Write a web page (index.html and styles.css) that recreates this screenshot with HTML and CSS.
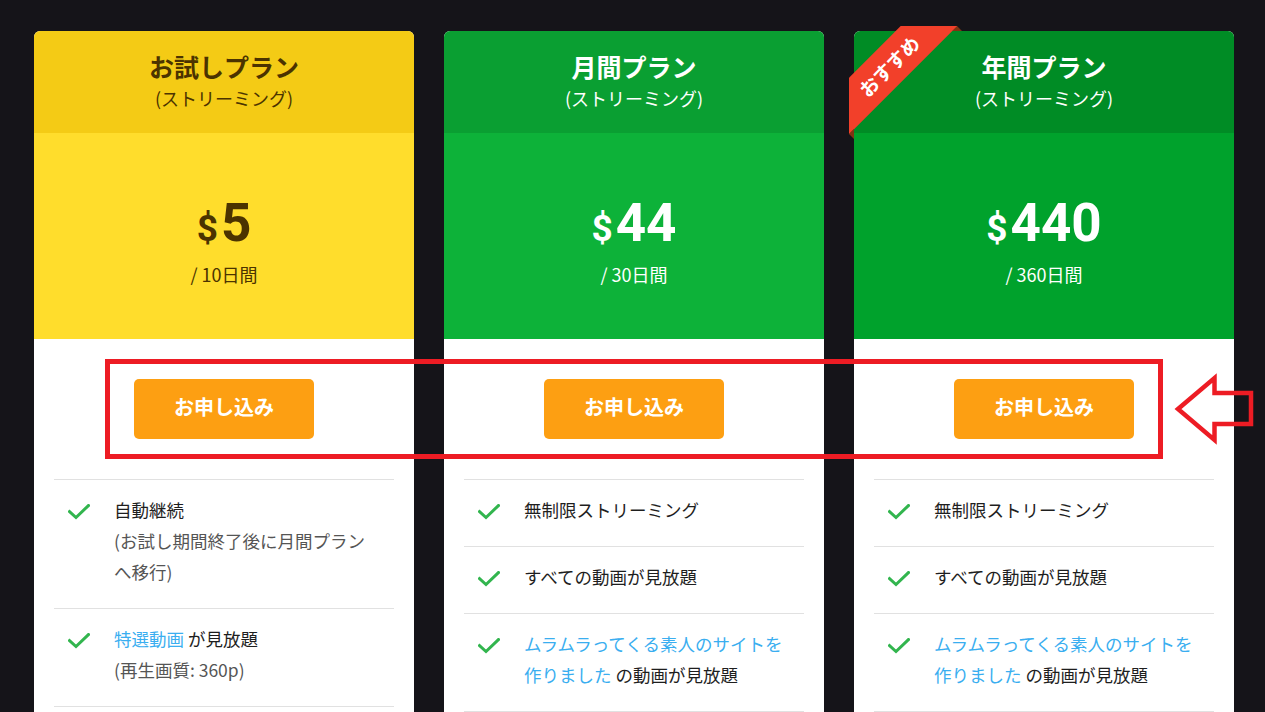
FILE: index.html
```html
<!DOCTYPE html>
<html lang="ja">
<head>
<meta charset="utf-8">
<title>プラン</title>
<link rel="stylesheet" href="styles.css">
</head>
<body>
<div class="page">
  <div class="plans">
    <div class="plan plan-trial">
      <div class="plan-head">
        <div class="plan-name">お試しプラン</div>
        <div class="plan-sub">(ストリーミング)</div>
      </div>
      <div class="plan-price">
        <div class="price"><span class="cur">$</span><span class="amt">5</span></div>
        <div class="period">/ 10日間</div>
      </div>
      <div class="plan-action"><a class="btn" href="#">お申し込み</a></div>
      <ul class="features">
        <li>
          <svg class="check" viewBox="0 0 22 16"><polyline points="1.5,7.5 8,13.5 20.5,1.5"/></svg>
          <div class="ftext">自動継続<span class="note">(お試し期間終了後に月間プラン<br>へ移行)</span></div>
        </li>
        <li>
          <svg class="check" viewBox="0 0 22 16"><polyline points="1.5,7.5 8,13.5 20.5,1.5"/></svg>
          <div class="ftext"><a class="link" href="#">特選動画</a> が見放題<span class="note">(再生画質: 360p)</span></div>
        </li>
      </ul>
    </div>

    <div class="plan plan-month">
      <div class="plan-head">
        <div class="plan-name">月間プラン</div>
        <div class="plan-sub">(ストリーミング)</div>
      </div>
      <div class="plan-price">
        <div class="price"><span class="cur">$</span><span class="amt">44</span></div>
        <div class="period">/ 30日間</div>
      </div>
      <div class="plan-action"><a class="btn" href="#">お申し込み</a></div>
      <ul class="features">
        <li>
          <svg class="check" viewBox="0 0 22 16"><polyline points="1.5,7.5 8,13.5 20.5,1.5"/></svg>
          <div class="ftext">無制限ストリーミング</div>
        </li>
        <li>
          <svg class="check" viewBox="0 0 22 16"><polyline points="1.5,7.5 8,13.5 20.5,1.5"/></svg>
          <div class="ftext">すべての動画が見放題</div>
        </li>
        <li>
          <svg class="check" viewBox="0 0 22 16"><polyline points="1.5,7.5 8,13.5 20.5,1.5"/></svg>
          <div class="ftext"><a class="link" href="#">ムラムラってくる素人のサイトを<br>作りました</a> の動画が見放題</div>
        </li>
      </ul>
    </div>

    <div class="plan plan-year">
      <div class="ribbon"><span>おすすめ</span></div>
      <div class="plan-head">
        <div class="plan-name">年間プラン</div>
        <div class="plan-sub">(ストリーミング)</div>
      </div>
      <div class="plan-price">
        <div class="price"><span class="cur">$</span><span class="amt">440</span></div>
        <div class="period">/ 360日間</div>
      </div>
      <div class="plan-action"><a class="btn" href="#">お申し込み</a></div>
      <ul class="features">
        <li>
          <svg class="check" viewBox="0 0 22 16"><polyline points="1.5,7.5 8,13.5 20.5,1.5"/></svg>
          <div class="ftext">無制限ストリーミング</div>
        </li>
        <li>
          <svg class="check" viewBox="0 0 22 16"><polyline points="1.5,7.5 8,13.5 20.5,1.5"/></svg>
          <div class="ftext">すべての動画が見放題</div>
        </li>
        <li>
          <svg class="check" viewBox="0 0 22 16"><polyline points="1.5,7.5 8,13.5 20.5,1.5"/></svg>
          <div class="ftext"><a class="link" href="#">ムラムラってくる素人のサイトを<br>作りました</a> の動画が見放題</div>
        </li>
      </ul>
    </div>
  </div>

  <div class="highlight"></div>
  <svg class="arrow" viewBox="0 0 90 80" width="90" height="80">
    <polygon points="8,39 44.5,8 44.5,23 81,23 81,54 44.5,54 44.5,70"/>
  </svg>
</div>
</body>
</html>
```

FILE: styles.css
```css
html, body {
  margin: 0;
  padding: 0;
}
body {
  background: #151419;
  font-family: "Noto Sans CJK JP", "Noto Sans", sans-serif;
  overflow: hidden;
}
.page {
  position: relative;
  width: 1265px;
  height: 712px;
  overflow: hidden;
}
.plans {
  display: flex;
  gap: 30px;
  padding: 31px 0 0 34px;
}
.plan {
  position: relative;
  width: 380px;
  padding-bottom: 60px;
  background: #ffffff;
  border-radius: 6px;
}
.plan-head {
  box-sizing: border-box;
  height: 102px;
  padding-top: 20px;
  text-align: center;
  border-radius: 6px 6px 0 0;
}
.plan-name {
  font-size: 25px;
  font-weight: 700;
  line-height: 30px;
}
.plan-sub {
  font-size: 18px;
  line-height: 34px;
}
.plan-price {
  box-sizing: border-box;
  height: 206px;
  padding-top: 64px;
  text-align: center;
}
.price {
  display: flex;
  justify-content: center;
  align-items: baseline;
  font-family: Roboto, "Liberation Sans", sans-serif;
  font-weight: 700;
}
.cur {
  font-size: 37px;
  line-height: 1;
  margin-right: 3px;
}
.amt {
  font-size: 53px;
  line-height: 1;
}
.period {
  margin-top: 11px;
  font-size: 18px;
  line-height: 26px;
}

.plan-trial .plan-head { background: #f4cb15; color: #4b3300; }
.plan-trial .plan-price { background: #ffdd2c; color: #4b3300; }
.plan-month .plan-head { background: #0a9f32; color: #ffffff; }
.plan-month .plan-price { background: #0db239; color: #ffffff; }
.plan-year .plan-head { background: #008c25; color: #ffffff; }
.plan-year .plan-price { background: #00a22c; color: #ffffff; }

.plan-action {
  display: flex;
  justify-content: center;
  padding: 40px 0;
}
.btn {
  display: block;
  width: 180px;
  height: 60px;
  line-height: 56px;
  background: #fd9f12;
  color: #ffffff;
  border-radius: 5px;
  text-align: center;
  font-size: 20px;
  font-weight: 700;
  text-decoration: none;
}
.features {
  list-style: none;
  margin: 0 20px;
  padding: 0;
  border-top: 1px solid #e1e1e1;
}
.features li {
  display: flex;
  align-items: flex-start;
  gap: 24px;
  padding: 14px 0 21px 14px;
  border-bottom: 1px solid #e1e1e1;
}
.check {
  flex: none;
  width: 22px;
  height: 16px;
  margin-top: 10px;
  fill: none;
  stroke: #32b54e;
  stroke-width: 3;
  stroke-linecap: square;
}
.ftext {
  font-size: 17.5px;
  line-height: 31px;
  color: #1e1e1e;
  white-space: nowrap;
}
.note {
  display: block;
  color: #555555;
}
.link {
  color: #3aaef0;
  text-decoration: none;
}

.ribbon {
  position: absolute;
  top: -5px;
  left: -5px;
  width: 113px;
  height: 113px;
  overflow: hidden;
  z-index: 2;
}
.ribbon::before,
.ribbon::after {
  content: "";
  position: absolute;
  background: #7e3512;
}
.ribbon::before {
  top: 0;
  left: 103px;
  width: 10px;
  height: 5px;
  clip-path: polygon(50% 0, 100% 100%, 0 100%);
}
.ribbon::after {
  left: 0;
  top: 103px;
  width: 5px;
  height: 10px;
  clip-path: polygon(0 50%, 100% 0, 100% 100%);
}
.ribbon span {
  position: absolute;
  left: -40px;
  top: 20px;
  width: 160px;
  height: 40px;
  line-height: 40px;
  background: #f2402a;
  color: #ffffff;
  text-align: center;
  font-size: 19px;
  font-weight: 700;
  transform: rotate(-45deg);
}

.highlight {
  position: absolute;
  left: 105px;
  top: 359px;
  width: 1058px;
  height: 100px;
  box-sizing: border-box;
  border: 5px solid #ed1c24;
}
.arrow {
  position: absolute;
  left: 1170px;
  top: 370px;
  fill: none;
  stroke: #ed1c24;
  stroke-width: 4.5;
  stroke-linejoin: miter;
}
```
